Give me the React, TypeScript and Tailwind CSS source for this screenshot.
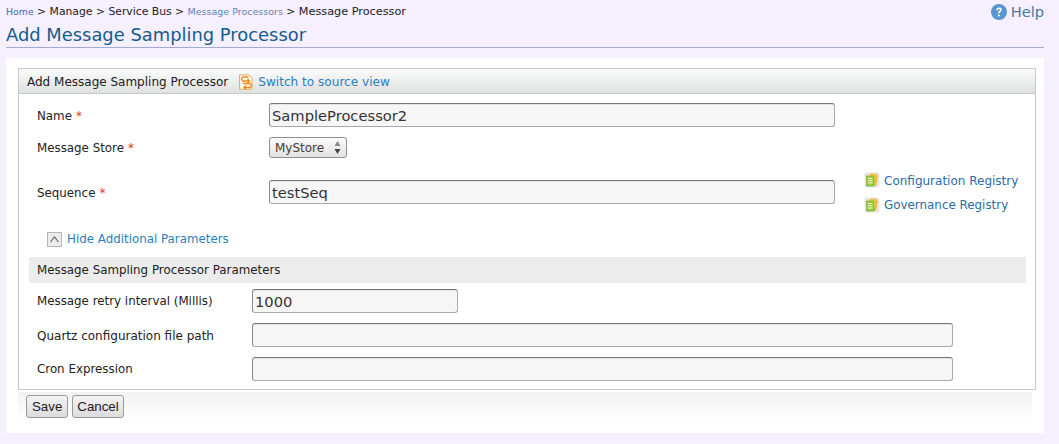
const textInput = "block h-[24px] rounded-[3px] border border-[#a9a9a9] border-t-[#767676] border-l-[#8a8a8a] bg-[#f6f6f6] px-[2px] text-[14.7px] leading-[20px] text-[#333] shadow-[inset_0_1px_0_#e4e4e4]";

function RegistryIcon() {
  return (
    <svg width="16" height="16" viewBox="0 0 16 16" className="shrink-0">
      <rect x="0.5" y="0.5" width="15" height="15" rx="2" fill="#e6e6e2" />
      <path d="M8 2.5l6 1-2 10H8z" fill="#f5b83a" />
      <path d="M6 2h6.5l-1 11H6z" fill="#f6d13a" stroke="#d8a820" strokeWidth="0.5" />
      <rect x="2.5" y="4" width="7.5" height="10" fill="#9ccc3c" stroke="#77a02c" strokeWidth="0.6" />
      <path d="M4 6.5h4.5M4 8.8h4.5M4 11h4.5" stroke="#eef7d6" strokeWidth="1.1" />
    </svg>
  );
}

function Req() {
  return <span className="ml-[4px] text-[#e8382c]">*</span>;
}

const App = () => {
  return (
    <div className="h-[444px] w-[1059px] overflow-hidden bg-[#f5effe] px-[6px] font-['DejaVu_Sans',sans-serif] text-[11.85px] text-[#222]">
      {/* Top: breadcrumb + title */}
      <div className="mr-[9px] h-[48px] border-b border-[#a3abd2]">
        <div className="flex h-[25px] items-start justify-between">
          <div className="pt-[5px] text-[10.8px] leading-[14px] text-[#222]">
            <span className="text-[9.4px] text-[#3f6ea8]">Home</span>
            <span> &gt; Manage &gt; Service Bus &gt; </span>
            <span className="text-[9.5px] text-[#6583b5]">Message Processors</span>
            <span> &gt; </span>
            <span className="text-[11.25px]">Message Processor</span>
          </div>
          <div className="flex items-center gap-[4px] pt-[3px] text-[14.6px] leading-[18px] text-[#4a7aa8]">
            <svg width="16" height="16" viewBox="0 0 16 16">
              <circle cx="8" cy="8" r="8" fill="#5b96cf" />
              <path d="M5.3 6.2c0-1.7 1.2-2.6 2.8-2.6s2.7.9 2.7 2.2c0 1.2-.8 1.7-1.5 2.2-.5.4-.7.6-.7 1.2H6.9c0-1.1.3-1.6 1-2.1.6-.4 1-.7 1-1.2s-.3-.8-.9-.8-1 .4-1 1z" fill="#fff" />
              <rect x="6.9" y="10.4" width="1.9" height="1.9" rx="0.4" fill="#fff" />
            </svg>
            <span>Help</span>
          </div>
        </div>
        <h1 className="text-[17.9px] leading-[20px] font-normal text-[#135c8e]">Add Message Sampling Processor</h1>
      </div>

      {/* Content panel */}
      <div className="mt-[10px] mr-[9px] h-[375px] bg-white pt-[10px] pr-[8px] pl-[12px]">
        <div className="h-[322px] border border-[#c8c8c8] bg-white">
          <div className="flex h-[25px] items-center border-b border-[#c8c8c8] bg-gradient-to-b from-[#fbfbfb] to-[#dfe1e1] pt-[1px] pl-[8px]">
            <span className="text-[12px]">Add Message Sampling Processor</span>
            <svg width="16" height="16" viewBox="0 0 16 16" className="mr-[4px] ml-[10px]">
              <path d="M1.5 .8h9.5l3 3v11.4H1.5z" fill="#fff8ea" stroke="#d9b470" />
              <path d="M10.5 3H5L3.5 4.5v1L5 7h6.5M9.5 5l2 2-2 2M5 9.5h7l1.5 1.5v1L12 13.5H6.5M8 11.5l-2 2 2 2" fill="none" stroke="#f08a1d" strokeWidth="1.3" />
            </svg>
            <span className="pt-[2px] text-[12.1px] text-[#2a7fbd]">Switch to source view</span>
          </div>

          {/* Main form */}
          <div className="pl-[18px]">
            <div className="flex h-[35px] items-center pt-[7px]">
              <label className="w-[232px] pt-[4px]">Name<Req /></label>
              <input readOnly value="SampleProcessor2" className={`${textInput} w-[566px]`} />
            </div>
            <div className="flex h-[31px] items-center pt-[8px]">
              <label className="w-[232px]">Message Store<Req /></label>
              <div className="mb-[2px] flex h-[21px] w-[78px] items-center justify-between rounded-[3px] border border-[#8f8f8f] bg-gradient-to-b from-[#fafafa] to-[#e2e2e2] pr-[5px] pl-[5px] text-[12px] text-[#4b3a32]">
                <span>MyStore</span>
                <svg width="7" height="15" viewBox="0 0 7 15">
                  <path d="M3.5 1 6.5 6H.5z" fill="#888" />
                  <path d="M3.5 14 6.5 9H.5z" fill="#444" />
                </svg>
              </div>
            </div>
            <div className="flex h-[69px] items-start pt-[20px]">
              <label className="w-[232px] pt-[5px]">Sequence<Req /></label>
              <input readOnly value="testSeq" className={`${textInput} w-[566px]`} />
              <div className="-mt-[8px] ml-[29px] flex flex-col gap-[9px] text-[12px] text-[#2b6ca3]">
                <div className="flex h-[16px] items-center gap-[4px]"><RegistryIcon /><span className="pt-[2px]">Configuration Registry</span></div>
                <div className="flex h-[16px] items-center gap-[4px]"><RegistryIcon /><span className="pt-[2px] text-[11.9px]">Governance Registry</span></div>
              </div>
            </div>
            <div className="flex h-[20px] items-center pl-[10px]">
              <span className="flex h-[15px] w-[15px] items-center justify-center border border-[#b4b4b4] bg-[#ececec]">
                <svg width="11" height="9" viewBox="0 0 11 9">
                  <path d="M1.5 7 5.5 2l4 5" fill="none" stroke="#666" strokeWidth="1.2" />
                </svg>
              </span>
              <span className="ml-[5px] pt-[2px] text-[#2a7fbd]">Hide Additional Parameters</span>
            </div>
          </div>

          {/* Parameters */}
          <div className="mt-[8px] mr-[9px] ml-[10px] flex h-[26px] items-center bg-[#ececec] pt-[2px] pl-[8px]">Message Sampling Processor Parameters</div>
          <div className="pl-[18px]">
            <div className="flex h-[30px] items-center pt-[6px]">
              <label className="w-[215px] pt-[2px]">Message retry interval (Millis)</label>
              <input readOnly value="1000" className={`${textInput} w-[206px]`} />
            </div>
            <div className="flex h-[36px] items-center pt-[8px]">
              <label className="w-[215px] pt-[2px] text-[12px]">Quartz configuration file path</label>
              <input readOnly value="" className={`${textInput} w-[701px]`} />
            </div>
            <div className="flex h-[32px] items-center pt-[8px]">
              <label className="w-[215px] pt-[2px]">Cron Expression</label>
              <input readOnly value="" className={`${textInput} w-[701px]`} />
            </div>
          </div>
        </div>

        {/* Buttons */}
        <div className="mt-[2px] mr-[4px] flex h-[28px] items-start gap-[4px] bg-gradient-to-b from-[#f1f1f1] to-white pt-[3px] pl-[8px] font-['Liberation_Sans',sans-serif] text-[13.3px]">
          <button className="h-[23px] rounded-[3px] border border-[#999] bg-gradient-to-b from-[#f4f4f4] to-[#dcdcdc] px-[5px] leading-[20px] text-[#222]">Save</button>
          <button className="h-[23px] rounded-[3px] border border-[#999] bg-gradient-to-b from-[#f4f4f4] to-[#dcdcdc] px-[4px] leading-[20px] text-[#222]">Cancel</button>
        </div>
      </div>
    </div>
  );
};

export default App;
